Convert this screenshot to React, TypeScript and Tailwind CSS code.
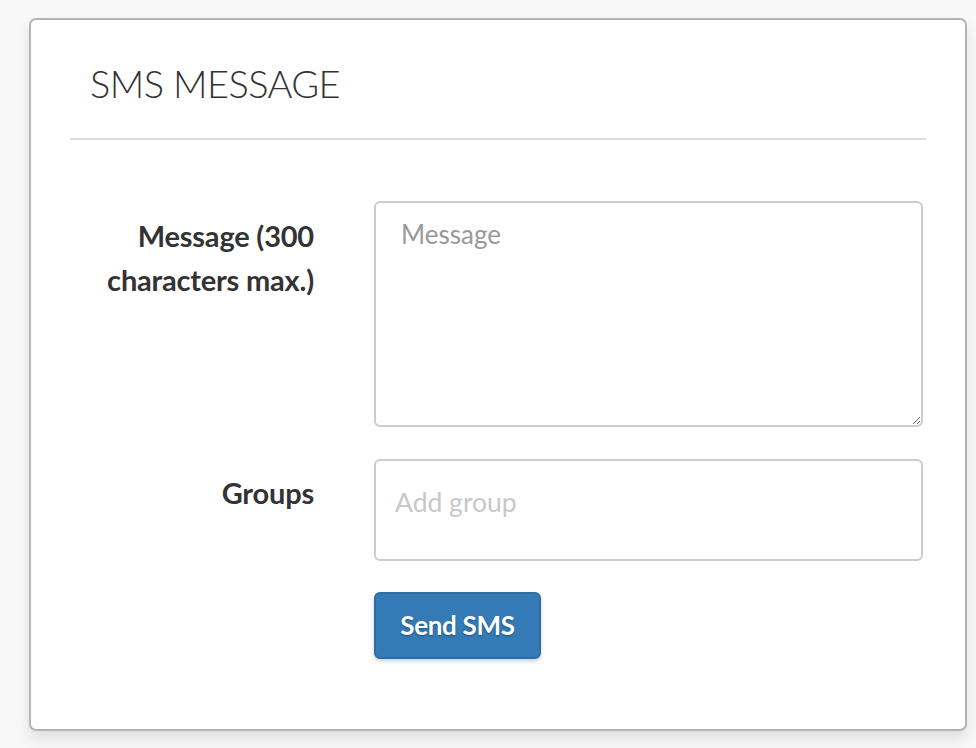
import React, {useState} from "react";

const SmsMessageCard: React.FC = () => {
    const [message, setMessage] = useState<string>("");
    const [group, setGroup] = useState<string>("");

    return (
        <div className="w-[938px] h-[713px] bg-white border-2 border-[#b1b6b4] rounded-[7px] shadow-[0_8px_14px_rgba(0,0,0,0.10)] px-[39px] pt-[41px]">
            <h1 className="pl-[20px] text-[38px] leading-[44px] font-light text-[#333] tracking-[-0.6px]">
                SMS MESSAGE
            </h1>
            <div className="mt-[33px] h-[2px] bg-[#dddddd]"/>

            <form className="mt-[61px] flex flex-col" onSubmit={e => e.preventDefault()}>
                <div className="flex">
                    <label className="w-[244px] shrink-0 pt-[13px] text-right text-[29px] leading-[44px] font-bold text-[#333] tracking-[-0.2px]">
                        Message (300 characters max.)
                    </label>
                    <textarea
                        className="ml-[60px] w-[549px] h-[226px] border-2 border-[#cccccc] rounded-[6px] px-[25px] pt-[11px] text-[26px] leading-[40px] text-[#555] placeholder:text-[#999] outline-none resize"
                        placeholder="Message"
                        value={message}
                        onChange={e => setMessage(e.target.value)}
                    />
                </div>

                <div className="flex mt-[32px]">
                    <label className="w-[244px] shrink-0 pt-[12px] text-right text-[29px] leading-[44px] font-bold text-[#333] tracking-[-0.2px]">
                        Groups
                    </label>
                    <div className="ml-[60px] w-[549px] h-[102px] border-2 border-[#cccccc] rounded-[6px] pl-[19px] pt-[21px]">
                        <input
                            className="w-full h-[40px] text-[26.5px] text-[#555] placeholder:text-[#c8c8c8] outline-none"
                            placeholder="Add group"
                            value={group}
                            onChange={e => setGroup(e.target.value)}
                        />
                    </div>
                </div>

                <div className="flex mt-[31px]">
                    <div className="w-[244px] shrink-0"/>
                    <button type="submit"
                            className="ml-[60px] w-[167px] h-[67px] bg-[#337ab7] border-2 border-[#2e6da4] rounded-[6px] text-white text-[26px] font-bold tracking-[-0.3px] shadow-[0_2px_4px_rgba(0,0,0,0.2)] [text-shadow:0_1px_2px_rgba(0,0,0,0.35)]">
                        Send SMS
                    </button>
                </div>
            </form>
        </div>
    );
}

export default function App() {
    return (
        <div className="min-h-screen bg-[#f8f8f8] pt-[18px] pl-[29px] font-['Lato',sans-serif]">
            <SmsMessageCard/>
        </div>
    );
}
